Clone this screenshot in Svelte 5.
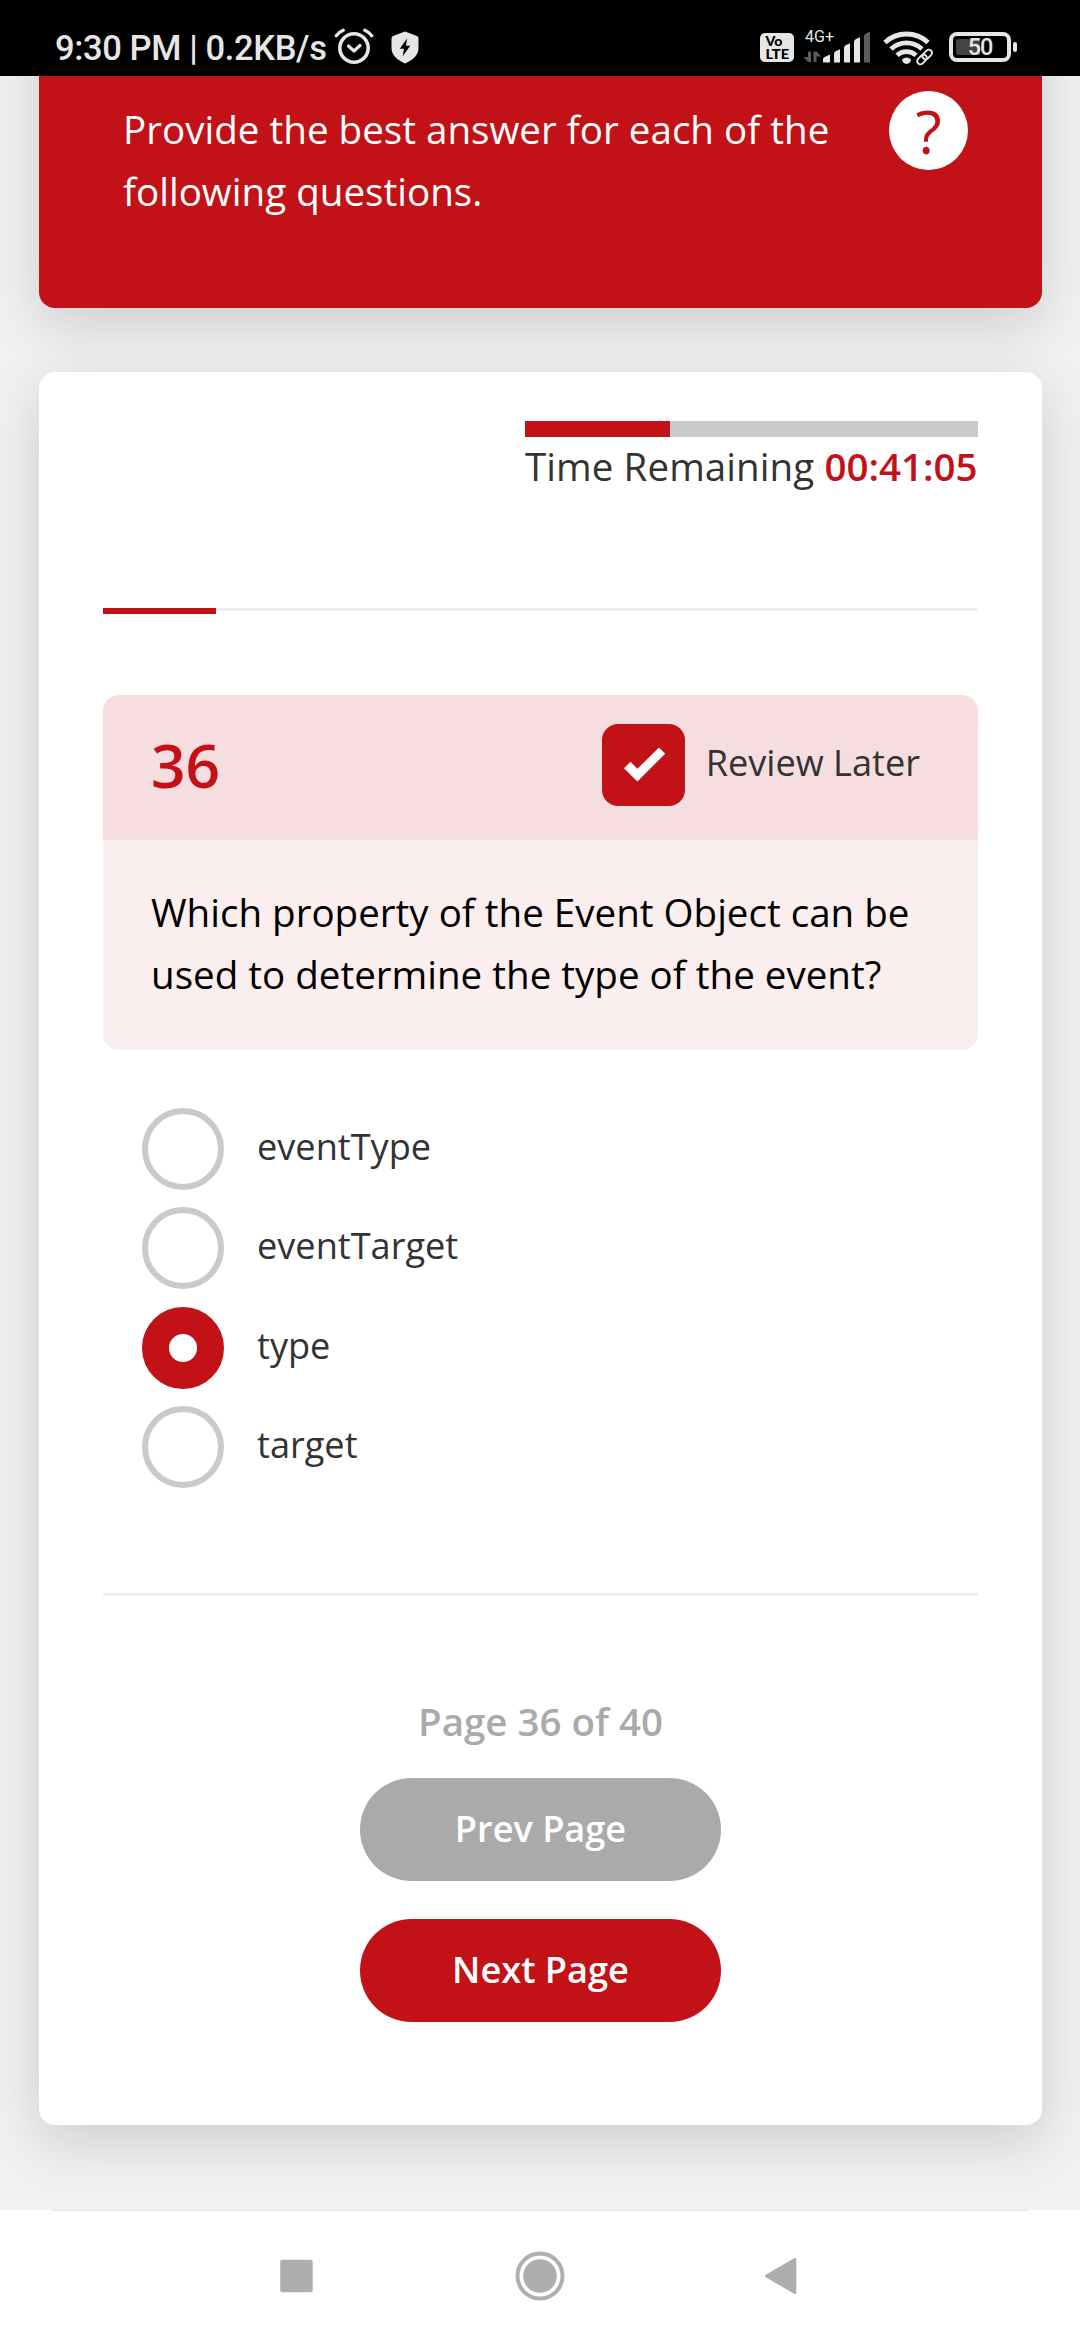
<script>
  const status = { text: '9:30 PM | 0.2KB/s', network: '4G+', battery: 50 };
  const question = {
    number: 36,
    total: 40,
    text: 'Which property of the Event Object can be used to determine the type of the event?',
    options: ['eventType', 'eventTarget', 'type', 'target']
  };
  let selected = $state('type');
  let reviewLater = $state(true);
  const timeUsed = 32;
  const sectionProgress = 12.9;
</script>

<div class="screen">
  <header class="status-bar">
    <div class="status-left">
      <span class="clock">{status.text}</span>
      <svg class="alarm" width="40" height="36" viewBox="0 0 40 36">
        <g fill="none" stroke="#e6e6e6" stroke-linecap="round">
          <circle cx="20" cy="20" r="14.2" stroke-width="3.6" />
          <path d="M14.5 18l5.500 5 6-5.500" stroke-width="3.2" stroke-linejoin="round" />
          <path d="M2.3 7.700Q5 4.100 9.200 2.300M37.700 7.700Q35 4.100 30.800 2.300" stroke-width="3.4" />
        </g>
      </svg>
      <svg class="shield" width="28" height="33" viewBox="0 0 28 33">
        <path d="M14 .5 26 5Q27.500 5.700 27.500 7.500V17C27.500 24.500 21 29.500 14 32.500 7 29.500 .5 24.500 .5 17V7.500Q.5 5.700 2 5Z" fill="#e6e6e6" />
        <path d="M16 7.500 8.800 17.800H13L11.700 25.300 19.200 14.800H15Z" fill="#000" />
      </svg>
    </div>
    <div class="status-right">
      <svg class="volte" width="34" height="29" viewBox="0 0 34 29">
        <rect width="34" height="29" rx="5" fill="#e6e6e6" />
        <text x="5.500" y="13" textLength="17" lengthAdjust="spacingAndGlyphs">Vo</text>
        <text x="5.500" y="26" textLength="23.500" lengthAdjust="spacingAndGlyphs">LTE</text>
      </svg>
      <div class="signal">
        <span class="network">{status.network}</span>
        <svg width="68" height="32" viewBox="0 0 68 32">
          <g fill="#5c5c5c">
            <path d="M5 31V20.500H8V31ZM5 31 .5 26H5ZM10.500 31V20.500H13.500V31ZM13.500 20.500 18 25.500H13.500Z" />
            <path d="M61 31.500V5Q61 3.500 63 2.500L67 .5V31.500Z" />
          </g>
          <g fill="#e6e6e6">
            <path d="M20 31.500V28Q20 26.500 22 25.700L27 23.500V31.500Z" />
            <path d="M31 31.500V22.500Q31 21 33 20L37 18.200V31.500Z" />
            <path d="M41 31.500V16.500Q41 15 43 14L47 12.200V31.500Z" />
            <path d="M51 31.500V10.500Q51 9 53 8L57 6.200V31.500Z" />
          </g>
        </svg>
      </div>
      <svg class="wifi" width="52" height="36" viewBox="0 0 52 36">
        <g fill="none" stroke="#e6e6e6" stroke-width="4.800">
          <path d="M2 12.500A31.500 31.500 0 0 1 45 12.500" />
          <path d="M8 19A22.500 22.500 0 0 1 39 19" />
          <path d="M14 25.300A14 14 0 0 1 33 25.300" />
        </g>
        <path d="M19 29.500Q23.500 25.500 28 29.500Q27.500 33.500 23.500 34 19.500 33.500 19 29.500Z" fill="#e6e6e6" />
        <path d="M34 36 30.500 30.500 43 18 52 18V36Z" fill="#000" />
        <g fill="none" stroke="#e6e6e6" stroke-width="2">
          <rect x="38.700" y="21.300" width="11" height="6.400" rx="3.200" transform="rotate(-45 44.200 24.500)" />
          <rect x="33.500" y="26.300" width="11" height="6.400" rx="3.200" transform="rotate(-45 39 29.500)" />
        </g>
      </svg>
      <div class="battery">
        <span class="shell"><i></i><em>{status.battery}</em></span>
        <span class="nub"></span>
      </div>
    </div>
  </header>

  <main>
    <section class="intro">
      <p>Provide the best answer for each of the following questions.</p>
      <button class="help">?</button>
    </section>

    <section class="quiz">
      <div class="timer">
        <div class="track"><div class="used" style:width="{timeUsed}%"></div></div>
        <div class="remaining">Time Remaining <strong>00:41:05</strong></div>
      </div>

      <div class="progress"><div style:width="{sectionProgress}%"></div></div>

      <article class="question">
        <div class="question-head">
          <strong>{question.number}</strong>
          <button class="review" onclick={() => (reviewLater = !reviewLater)}>
            <svg width="83" height="82" viewBox="0 0 83 82">
              <rect width="83" height="82" rx="16" fill="#c21217" />
              {#if reviewLater}
                <path d="M22 44.300 28.500 37.800 35.400 44.800 57 23.500 63.200 29.700 35.400 57.500Z" fill="#fff" />
              {/if}
            </svg>
            <span>Review Later</span>
          </button>
        </div>
        <p>{question.text}</p>
      </article>

      <div class="options">
        {#each question.options as option}
          <button class="option" onclick={() => (selected = option)}>
            <span class="radio" class:checked={selected === option}></span>
            <span class="label">{option}</span>
          </button>
        {/each}
      </div>

      <footer class="pager">
        <div class="page">Page {question.number} of {question.total}</div>
        <button class="prev">Prev Page</button>
        <button class="next">Next Page</button>
      </footer>
    </section>
  </main>

  <nav>
    <div class="nav-line"></div>
    <div class="nav-icons">
      <svg width="50" height="50" viewBox="0 0 50 50"><rect x="9.200" y="8.800" width="32.500" height="32.500" rx="2" fill="#aeaeae" /></svg>
      <svg width="50" height="50" viewBox="0 0 50 50">
        <circle cx="25" cy="25" r="22.500" fill="none" stroke="#aeaeae" stroke-width="4" />
        <circle cx="25" cy="25" r="16.800" fill="#aeaeae" />
      </svg>
      <svg width="50" height="50" viewBox="0 0 50 50"><path d="M6.500 25 34.800 8.500V41.500Z" fill="#aeaeae" stroke="#aeaeae" stroke-width="3" stroke-linejoin="round" /></svg>
    </div>
  </nav>
</div>

<style>
  :global(body) { margin: 0; background: #fff; }
  .screen {
    width: 1080px;
    height: 2340px;
    overflow: hidden;
    display: flex;
    flex-direction: column;
    font-family: 'Open Sans', 'Noto Sans', sans-serif;
    font-size: 38.5px;
    line-height: 61.6px;
    color: #333;
  }
  p { margin: 0; }
  button { border: 0; padding: 0; background: none; font: inherit; color: inherit; text-align: left; }
  svg { display: block; flex: none; }

  .status-bar {
    height: 76px;
    flex: none;
    background: #000;
    color: #e6e6e6;
    display: flex;
    justify-content: space-between;
    padding: 0 63px 0 55px;
    box-sizing: border-box;
    font-family: Roboto, sans-serif;
  }
  .status-left, .status-right { display: flex; align-items: flex-start; }
  .clock { width: 279px; padding-top: 28px; font-size: 34.5px; line-height: 40px; font-weight: 500; white-space: nowrap; letter-spacing: -0.38px; }
  .alarm { margin-top: 28px; }
  .shield { margin: 31px 0 0 17px; }
  .volte { margin-top: 33px; }
  .volte text { font: 900 12.7px Lato, sans-serif; fill: #000; }
  .signal { margin: 31px 0 0 9px; display: grid; }
  .signal > * { grid-area: 1 / 1; }
  .network { font-size: 16px; line-height: 12px; padding-left: 2px; }
  .wifi { margin: 30px 0 0 12px; }
  .battery { display: flex; align-items: center; gap: 2px; margin: 32px 0 0 14px; height: 30px; }
  .shell {
    width: 62px;
    height: 30px;
    box-sizing: border-box;
    border: 4px solid #e6e6e6;
    border-radius: 8px;
    display: grid;
    align-items: center;
    padding: 0 3px;
  }
  .shell > * { grid-area: 1 / 1; }
  .shell i { width: 24px; height: 16px; border-radius: 3px 0 0 3px; background: #444; }
  .shell em { padding-top: 1px; font: 500 23.5px/21px Roboto, sans-serif; letter-spacing: -1px; text-align: center; }
  .nub { width: 4px; height: 10px; border-radius: 2px; background: #e6e6e6; }

  main {
    height: 2134px;
    flex: none;
    box-sizing: border-box;
    padding: 0 38px 0 39px;
    overflow: hidden;
    background: #f1f1f1;
  }
  .intro {
    position: relative;
    z-index: 1;
    height: 332px;
    margin-top: -100px;
    box-sizing: border-box;
    padding: 115px 74px 0 84px;
    display: flex;
    justify-content: space-between;
    background: #c21217;
    color: #fff;
    border-radius: 16px;
    box-shadow: 0 16.5px 55px rgba(0, 0, 0, 0.15);
  }
  .intro p { width: 720px; padding-top: 8px; font-size: 38.6px; }
  .help {
    width: 79px;
    height: 79px;
    border-radius: 50%;
    background: #fff;
    color: #c21217;
    font-size: 60.5px;
    line-height: 77px;
    text-align: center;
  }
  .quiz {
    height: 1753px;
    margin-top: 64px;
    box-sizing: border-box;
    padding: 49px 64px 0;
    border-radius: 16px;
    background: #fff;
    box-shadow: 0 16.5px 55px rgba(0, 0, 0, 0.15);
  }
  .timer { width: 453px; margin-left: auto; }
  .track { height: 16px; background: #cacaca; }
  .used { height: 100%; background: #c21217; }
  .remaining { padding-top: 1px; line-height: 57px; white-space: nowrap; letter-spacing: 0.08px; }
  .remaining strong { font-weight: 600; color: #c21217; letter-spacing: 0; }
  .progress { height: 3px; margin-top: 113px; background: #eee; }
  .progress div { height: 6px; background: #c21217; }

  .question { margin-top: 84px; height: 355px; border-radius: 16px; overflow: hidden; background: #faeeee; color: #000; }
  .question-head {
    height: 145px;
    box-sizing: border-box;
    padding: 0 58px 0 48px;
    display: flex;
    align-items: flex-start;
    justify-content: space-between;
    background: #f6dee0;
  }
  .question-head strong { font-size: 60.5px; line-height: 140px; font-weight: 600; color: #c21217; }
  .review { display: flex; gap: 21px; margin-top: 29px; color: #333; font-size: 36.15px; line-height: 76px; }
  .question p { padding: 42px 40px 0 48px; font-size: 38.55px; }

  .options { margin-top: 58px; padding-left: 39px; display: flex; flex-direction: column; gap: 17.3px; }
  .option { display: flex; gap: 33px; height: 82px; font-size: 36.15px; line-height: 76px; }
  .radio { width: 82px; height: 82px; box-sizing: border-box; border: 6px solid #cacaca; border-radius: 50%; }
  .radio.checked { border: 27px solid #c21217; }

  .pager {
    margin-top: 105px;
    padding-top: 94px;
    border-top: 3px solid #eee;
    display: flex;
    flex-direction: column;
    align-items: center;
    font-weight: 600;
  }
  .page { color: #aaa; line-height: 62px; }
  .pager button { width: 361px; height: 103px; border-radius: 52px; color: #fff; font-size: 36.15px; line-height: 98px; text-align: center; padding-bottom: 3px; }
  .prev { margin-top: 26px; background: #aaa; }
  .next { margin-top: 38px; background: #c21217; }
  .pager .prev { background: #aaa; }
  .pager .next { background: #c21217; }

  nav { height: 130px; background: #fff; }
  .nav-line { height: 1px; margin: 0 52px; background: #e2e2e2; }
  .nav-icons { display: flex; justify-content: center; gap: 194.500px; padding-top: 39.500px; }
</style>
